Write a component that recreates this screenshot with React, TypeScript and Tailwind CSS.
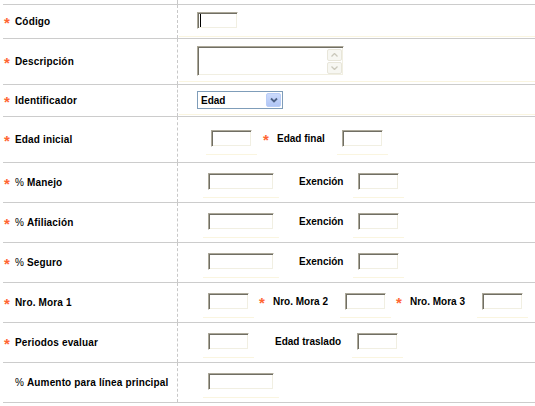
import React from "react";

const line = "border-[#cccccc]";

function Star() {
  return (
    <span className="text-[#ff6633] font-bold text-[15px] leading-none relative top-px">*</span>
  );
}

function TextBox({ w, caret }: { w: string; caret?: boolean }) {
  return (
    <div className="relative">
      <input
        type="text"
        readOnly
        className={`${w} h-[17px] block bg-white outline-none border border-t-[#aca899] border-l-[#aca899] border-r-white border-b-white shadow-[inset_1px_1px_0_#716f64,inset_-1px_-1px_0_#f1efe2]`}
      />
      {caret && <span className="absolute left-[3px] top-[2px] w-px h-[13px] bg-black" />}
    </div>
  );
}

// a cell holding one input, with the faint cream rule under it
function Cell({ w, className = "" }: { w: string; className?: string }) {
  return (
    <div className={`pl-[5px] pr-[5px] pb-[7px] border-b border-[#faf5e0] ${className}`}>
      <TextBox w={w} />
    </div>
  );
}

function Label({ text, required, className }: { text: string; required?: boolean; className: string }) {
  return (
    <div className={`h-[17px] flex items-center font-bold ${className}`}>
      {required && <span className="w-[14px] flex items-center"><Star /></span>}
      <span>{text}</span>
    </div>
  );
}

function Row({
  label,
  pct,
  required = true,
  h,
  pt,
  last,
  children,
}: {
  label: string;
  pct?: boolean;
  required?: boolean;
  h: string;
  pt: string;
  last?: boolean;
  children: React.ReactNode;
}) {
  return (
    <div className={`flex border-t ${line} ${last ? `border-b` : ""} ${h}`}>
      <div className={`w-[175px] shrink-0 flex items-center border-r border-dashed border-[#c8c8c8]`}>
        <span className="w-[12px] pl-[1px] flex items-center">{required && <Star />}</span>
        <span className="font-bold tracking-[0.15px]">
          {pct && <span className="font-normal">% </span>}
          {label}
        </span>
      </div>
      <div className={`flex-1 flex items-start ${pt}`}>{children}</div>
    </div>
  );
}

function ScrollBtn({ up }: { up?: boolean }) {
  return (
    <div className="w-[15px] h-[12px] flex items-center justify-center bg-[#f7f7f2] border border-[#e8e6da] rounded-[2px]">
      <svg width="7" height="4" viewBox="0 0 7 4">
        <path d={up ? "M0.5 3.5 L3.5 0.5 L6.5 3.5" : "M0.5 0.5 L3.5 3.5 L6.5 0.5"} fill="none" stroke="#cac8bb" strokeWidth="1.3" />
      </svg>
    </div>
  );
}

export default function App() {
  return (
    <div className="w-[535px] h-[406px] bg-white text-black text-[10px] font-['Liberation_Sans',Arial,sans-serif] overflow-hidden">
      <div className="pl-[3px]">
        <div className="flex h-[4px]">
          <div className="w-[175px] border-r border-dashed border-[#c8c8c8]" />
        </div>

        <Row label="Código" h="h-[34px]" pt="pt-[7px]">
          <div className="flex-1 ml-px pl-[18px] pb-[7px] border-b border-[#faf5e0]">
            <div className="relative w-[41px]">
              <TextBox w="w-[41px]" caret />
            </div>
          </div>
        </Row>

        <Row label="Descripción" h="h-[46px]" pt="pt-[7px]">
          <div className="flex-1 ml-px pl-[18px] pb-[5px] border-b border-[#faf5e0]">
            <div className="w-[147px] h-[30px] flex bg-white border border-t-[#aca899] border-l-[#aca899] border-r-white border-b-white shadow-[inset_1px_1px_0_#716f64,inset_-1px_-1px_0_#f1efe2]">
              <textarea readOnly className="flex-1 resize-none outline-none bg-transparent" />
              <div className="flex flex-col gap-px pt-[2px] pr-[1px]">
                <ScrollBtn up />
                <ScrollBtn />
              </div>
            </div>
          </div>
        </Row>

        <Row label="Identificador" h="h-[32px]" pt="pt-[6px]">
          <div className="flex-1 ml-px pl-[18px] pb-[5px] border-b border-[#faf5e0]">
            <div className="w-[86px] h-[18px] flex items-center justify-between bg-white border border-[#7f9db9] pl-[3px] pr-px">
              <span className="font-bold">Edad</span>
              <div className="w-[15px] h-[14px] flex items-center justify-center rounded-[2px] border border-[#b9cdf7] bg-gradient-to-b from-[#cbdafc] to-[#b1c6f5]">
                <svg width="8" height="6" viewBox="0 0 8 6">
                  <path d="M1 1.5 L4 4.5 L7 1.5" fill="none" stroke="#4d6185" strokeWidth="1.8" />
                </svg>
              </div>
            </div>
          </div>
        </Row>

        <Row label="Edad inicial" h="h-[46px]" pt="pt-[13px]">
          <Cell w="w-[41px]" className="ml-[28px]" />
          <Label text="Edad final" required className="w-[80px] pl-[6px]" />
          <Cell w="w-[41px]" />
        </Row>

        <Row label="Manejo" pct h="h-[40px]" pt="pt-[10px]">
          <Cell w="w-[66px]" className="ml-[25px]" />
          <Label text="Exención" className="w-[74px] pl-[20px]" />
          <Cell w="w-[41px]" />
        </Row>

        <Row label="Afiliación" pct h="h-[40px]" pt="pt-[10px]">
          <Cell w="w-[66px]" className="ml-[25px]" />
          <Label text="Exención" className="w-[74px] pl-[20px]" />
          <Cell w="w-[41px]" />
        </Row>

        <Row label="Seguro" pct h="h-[40px]" pt="pt-[10px]">
          <Cell w="w-[66px]" className="ml-[25px]" />
          <Label text="Exención" className="w-[74px] pl-[20px]" />
          <Cell w="w-[41px]" />
        </Row>

        <Row label="Nro. Mora 1" h="h-[40px]" pt="pt-[10px]">
          <Cell w="w-[41px]" className="ml-[25px]" />
          <Label text="Nro. Mora 2" required className="w-[86px] pl-[5px]" />
          <Cell w="w-[41px]" />
          <Label text="Nro. Mora 3" required className="w-[86px] pl-[5px]" />
          <Cell w="w-[41px]" />
        </Row>

        <Row label="Periodos evaluar" h="h-[40px]" pt="pt-[10px]">
          <Cell w="w-[41px]" className="ml-[25px]" />
          <Label text="Edad traslado" className="w-[98px] pl-[21px]" />
          <Cell w="w-[41px]" />
        </Row>

        <Row label="Aumento para línea principal" pct required={false} h="h-[41px]" pt="pt-[10px]" last>
          <Cell w="w-[66px]" className="ml-[25px]" />
        </Row>
      </div>
    </div>
  );
}
